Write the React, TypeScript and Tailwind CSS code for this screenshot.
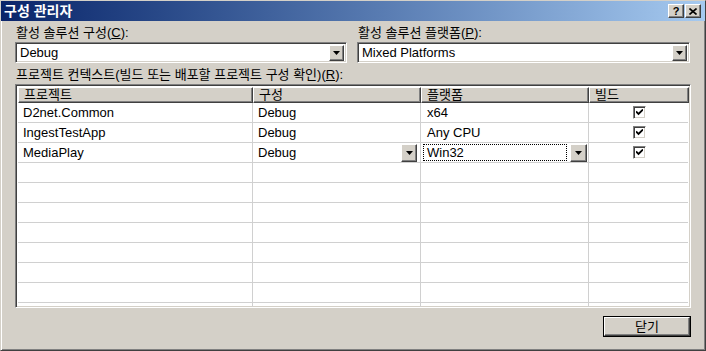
import React from "react";

const font = "font-['Liberation_Sans','Noto_Sans_CJK_KR',sans-serif]";

const raised =
  "border border-t-white border-l-white border-r-[#404040] border-b-[#404040] shadow-[inset_-1px_-1px_0_#808080] bg-[#d4d0c8]";
const sunken =
  "border border-t-[#808080] border-l-[#808080] border-r-white border-b-white shadow-[inset_1px_1px_0_#404040,inset_-1px_-1px_0_#d4d0c8]";

function Arrow() {
  return (
    <svg width="7" height="4" viewBox="0 0 7 4" className="block">
      <path d="M0 0h7L3.5 4z" fill="#000" />
    </svg>
  );
}

function ArrowButton({ className = "" }: { className?: string }) {
  return (
    <div className={`flex items-center justify-center ${raised} ${className}`}>
      <Arrow />
    </div>
  );
}

function ComboBox({ value }: { value: string }) {
  return (
    <div className={`flex h-[21px] items-center bg-white pl-[3px] pr-[2px] ${sunken}`}>
      <span className="flex-1 pl-[1px] leading-none text-black">{value}</span>
      <ArrowButton className="h-[16px] w-[15px]" />
    </div>
  );
}

function Check() {
  return (
    <div className={`flex h-[13px] w-[13px] items-center justify-center bg-white ${sunken}`}>
      <svg width="7" height="7" viewBox="0 0 7 7" className="block">
        <path d="M0 2.5l2.5 2.5L7 0.5" stroke="#000" strokeWidth="1.8" fill="none" />
      </svg>
    </div>
  );
}

const rows = [
  { project: "D2net.Common", config: "Debug", platform: "x64" },
  { project: "IngestTestApp", config: "Debug", platform: "Any CPU" },
  { project: "MediaPlay", config: "Debug", platform: "Win32", editing: true },
];

const cols = "grid grid-cols-[235px_168px_168px_100px]";

export default function App() {
  return (
    <div
      className={`${font} flex h-[351px] w-[706px] flex-col border border-t-[#d4d0c8] border-l-[#d4d0c8] border-r-[#404040] border-b-[#404040] bg-[#d4d0c8] text-[13px] text-black shadow-[inset_1px_1px_0_#ffffff,inset_-1px_-1px_0_#808080]`}
    >
      <div className="flex h-[20px] items-center bg-gradient-to-r from-[#0a246a] to-[#a6caf0] pl-[3px] pr-[3px]">
        <span className="flex-1 text-[14px] font-bold leading-none text-white">구성 관리자</span>
        <div className="flex gap-[1px] pr-[1px]">
          <div className={`flex h-[14px] w-[16px] items-center justify-center text-[11px] font-bold leading-none ${raised}`}>?</div>
          <div className={`flex h-[14px] w-[16px] items-center justify-center ${raised}`}>
            <svg width="8" height="7" viewBox="0 0 8 7">
              <path d="M0.5 0.5l7 6M7.5 0.5l-7 6" stroke="#000" strokeWidth="1.6" />
            </svg>
          </div>
        </div>
      </div>

      <div className="flex flex-1 flex-col px-[14px]">
        <div className="mt-[5px] grid grid-cols-[332px_333px] gap-[10px]">
          <div className="flex flex-col">
            <div className="h-[14px] pl-[1px] leading-[14px]">
              활성 솔루션 구성(<span className="underline">C</span>):
            </div>
            <div className="mt-[2px]">
              <ComboBox value="Debug" />
            </div>
          </div>
          <div className="flex flex-col">
            <div className="h-[14px] pl-[1px] leading-[14px]">
              활성 솔루션 플랫폼(<span className="underline">P</span>):
            </div>
            <div className="mt-[2px]">
              <ComboBox value="Mixed Platforms" />
            </div>
          </div>
        </div>

        <div className="mt-[5px] h-[14px] pl-[1px] leading-[14px]">
          프로젝트 컨텍스트(빌드 또는 배포할 프로젝트 구성 확인)(<span className="underline">R</span>):
        </div>

        <div className={`mt-[2px] h-[224px] overflow-hidden bg-white p-[2px] ${sunken}`}>
          <div className={cols}>
            {["프로젝트", "구성", "플랫폼", "빌드"].map((h) => (
              <div key={h} className={`h-[16px] pl-[5px] leading-[14px] ${raised}`}>
                {h}
              </div>
            ))}
          </div>
          {Array.from({ length: 11 }).map((_, i) => {
            const r = rows[i];
            return (
              <div key={i} className={`${cols} h-[20px] border-b border-[#d0d0d0]`}>
                <div className="flex items-center border-r border-[#d0d0d0] pl-[5px]">{r?.project}</div>
                <div className="flex items-center border-r border-[#d0d0d0] pl-[5px] pr-[3px]">
                  <span className="flex-1">{r?.config}</span>
                  {r?.editing && <ArrowButton className="h-[18px] w-[16px]" />}
                </div>
                <div className="flex items-center border-r border-[#d0d0d0] pl-[2px] pr-[1px]">
                  {r?.editing ? (
                    <>
                      <span className="flex h-[17px] flex-1 items-center border border-dotted border-black pl-[3px]">
                        {r.platform}
                      </span>
                      <ArrowButton className="ml-[3px] h-[18px] w-[17px]" />
                    </>
                  ) : (
                    <span className="pl-[4px]">{r?.platform}</span>
                  )}
                </div>
                <div className="flex items-center justify-center">{r && <Check />}</div>
              </div>
            );
          })}
        </div>

        <div className="mt-[8px] flex justify-end">
          <div className="border border-black">
            <div className={`flex h-[19px] w-[86px] items-center justify-center ${raised}`}>닫기</div>
          </div>
        </div>
      </div>
    </div>
  );
}
